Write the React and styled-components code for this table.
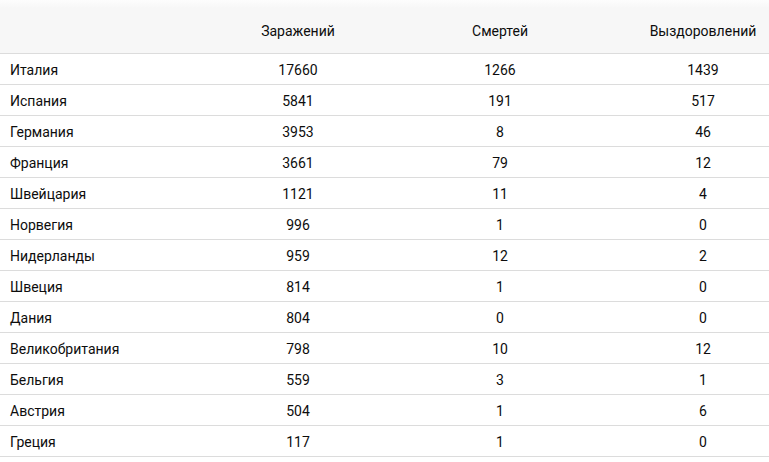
import React from "react";
import styled, { createGlobalStyle } from "styled-components";

const GlobalStyle = createGlobalStyle`
  html, body {
    margin: 0;
    padding: 0;
    background: #fff;
    overflow: hidden;
  }
  body {
    font-family: Roboto, "Liberation Sans", Arial, sans-serif;
    color: #111;
  }
`;

const Wrapper = styled.section`
  width: 769px;
  overflow: hidden;
`;

const TopShade = styled.div`
  width: 805px;
  height: 8px;
  background: linear-gradient(to bottom, #fdfdfd 0%, #f7f7f7 100%);
`;

const Table = styled.div`
  width: 805px;
`;

const Row = styled.div`
  display: grid;
  grid-template-columns: 197px 202px 202px 204px;
  align-items: center;
  height: ${(p) => (p.head ? "46px" : "31px")};
  background: ${(p) => (p.head ? "#f7f7f7" : "#fff")};
  border-bottom: 1px solid #dcdcdc;
  box-sizing: border-box;
  font-size: 14px;
`;

const Cell = styled.div`
  padding: 0 10px;
  text-align: ${(p) => (p.left ? "left" : "center")};
  white-space: nowrap;
  color: #0d0d0d;
  padding-top: 1px;
`;

const data = [
  ["Италия", 17660, 1266, 1439],
  ["Испания", 5841, 191, 517],
  ["Германия", 3953, 8, 46],
  ["Франция", 3661, 79, 12],
  ["Швейцария", 1121, 11, 4],
  ["Норвегия", 996, 1, 0],
  ["Нидерланды", 959, 12, 2],
  ["Швеция", 814, 1, 0],
  ["Дания", 804, 0, 0],
  ["Великобритания", 798, 10, 12],
  ["Бельгия", 559, 3, 1],
  ["Австрия", 504, 1, 6],
  ["Греция", 117, 1, 0],
];

const App = () => {
  return (
    <>
      <GlobalStyle />
      <Wrapper>
        <TopShade />
        <Table>
          <Row head>
            <Cell left></Cell>
            <Cell>Заражений</Cell>
            <Cell>Смертей</Cell>
            <Cell>Выздоровлений</Cell>
          </Row>
          {data.map(([country, cases, deaths, recovered]) => (
            <Row key={country}>
              <Cell left>{country}</Cell>
              <Cell>{cases}</Cell>
              <Cell>{deaths}</Cell>
              <Cell>{recovered}</Cell>
            </Row>
          ))}
        </Table>
      </Wrapper>
    </>
  );
};

export default App;
